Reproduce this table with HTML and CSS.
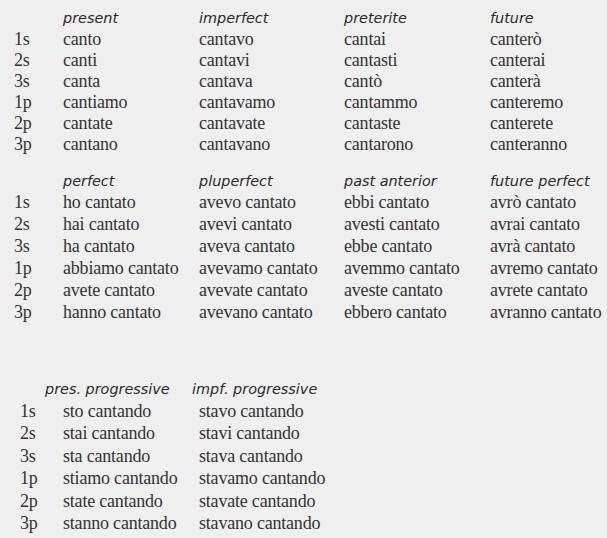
FILE: index.html
```html
<!DOCTYPE html>
<html lang="it">
<head>
<meta charset="utf-8">
<title>cantare</title>
<link rel="stylesheet" href="styles.css">
</head>
<body>
<div class="block simple">
  <span></span><span class="h">present</span><span class="h">imperfect</span><span class="h">preterite</span><span class="h">future</span>
  <span class="p">1s</span><span>canto</span><span>cantavo</span><span>cantai</span><span>canterò</span>
  <span class="p">2s</span><span>canti</span><span>cantavi</span><span>cantasti</span><span>canterai</span>
  <span class="p">3s</span><span>canta</span><span>cantava</span><span>cantò</span><span>canterà</span>
  <span class="p">1p</span><span>cantiamo</span><span>cantavamo</span><span>cantammo</span><span>canteremo</span>
  <span class="p">2p</span><span>cantate</span><span>cantavate</span><span>cantaste</span><span>canterete</span>
  <span class="p">3p</span><span>cantano</span><span>cantavano</span><span>cantarono</span><span>canteranno</span>
</div>
<div class="block compound">
  <span></span><span class="h">perfect</span><span class="h">pluperfect</span><span class="h">past anterior</span><span class="h">future perfect</span>
  <span class="p">1s</span><span>ho cantato</span><span>avevo cantato</span><span>ebbi cantato</span><span>avrò cantato</span>
  <span class="p">2s</span><span>hai cantato</span><span>avevi cantato</span><span>avesti cantato</span><span>avrai cantato</span>
  <span class="p">3s</span><span>ha cantato</span><span>aveva cantato</span><span>ebbe cantato</span><span>avrà cantato</span>
  <span class="p">1p</span><span>abbiamo cantato</span><span>avevamo cantato</span><span>avemmo cantato</span><span>avremo cantato</span>
  <span class="p">2p</span><span>avete cantato</span><span>avevate cantato</span><span>aveste cantato</span><span>avrete cantato</span>
  <span class="p">3p</span><span>hanno cantato</span><span>avevano cantato</span><span>ebbero cantato</span><span>avranno cantato</span>
</div>
<div class="prog-head">
  <span class="h">pres. progressive</span><span class="h">impf. progressive</span>
</div>
<div class="block progressive">
  <span class="p">1s</span><span>sto cantando</span><span>stavo cantando</span>
  <span class="p">2s</span><span>stai cantando</span><span>stavi cantando</span>
  <span class="p">3s</span><span>sta cantando</span><span>stava cantando</span>
  <span class="p">1p</span><span>stiamo cantando</span><span>stavamo cantando</span>
  <span class="p">2p</span><span>state cantando</span><span>stavate cantando</span>
  <span class="p">3p</span><span>stanno cantando</span><span>stavano cantando</span>
</div>
</body>
</html>
```
FILE: styles.css
```css
html, body {
  margin: 0;
  padding: 0;
  background: #efefef;
}
body {
  color: #333333;
  font-family: "Liberation Serif", serif;
  font-size: 18px;
  letter-spacing: -0.2px;
}
.block {
  display: grid;
  white-space: nowrap;
}
.block span, .prog-head span {
  display: block;
}
.h {
  font-family: "DejaVu Sans", sans-serif;
  font-style: italic;
  font-size: 14.4px;
  letter-spacing: 0;
  color: #2a2a2a;
}
.simple {
  padding: 8px 0 0 14px;
  grid-template-columns: 49px 136px 145px 146px auto;
  grid-template-rows: 21px;
  grid-auto-rows: 21px;
  line-height: 21px;
}
.compound {
  padding: 15px 0 0 14px;
  grid-template-columns: 49px 136px 145px 146px auto;
  grid-template-rows: 21px;
  grid-auto-rows: 22px;
  line-height: 22px;
}
.prog-head {
  display: grid;
  white-space: nowrap;
  padding: 56px 0 0 45px;
  grid-template-columns: 147px auto;
  height: 21px;
  line-height: 21px;
}
.progressive {
  padding: 0 0 0 20px;
  grid-template-columns: 43px 136px auto;
  grid-auto-rows: 22.4px;
  line-height: 22px;
}
```
